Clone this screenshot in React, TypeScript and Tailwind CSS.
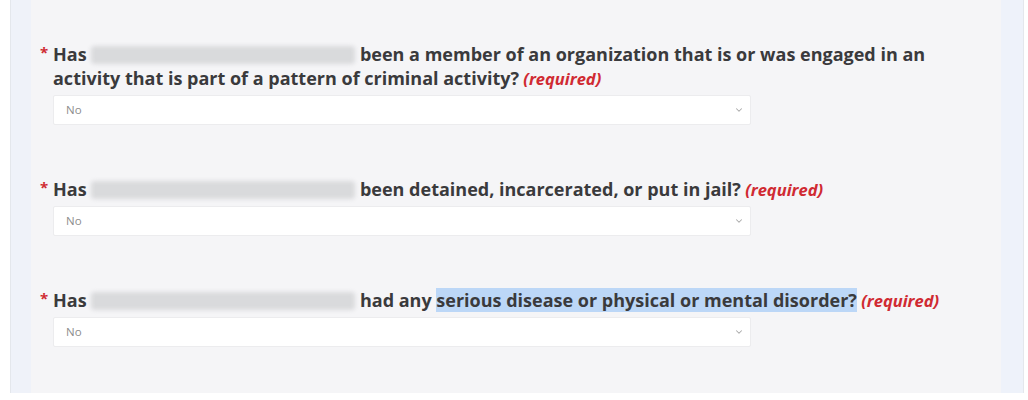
import { ChevronDown } from "lucide-react";
import type { ReactNode } from "react";

const FONT = "font-['Open_Sans','Noto_Sans',sans-serif]";

interface QuestionProps {
  children: ReactNode;
  first?: boolean;
}

// Greyed-out name placeholder inside each question
const Redacted = () => (
  <span className="inline-block w-[264px] h-[18px] align-[-3px] rounded-sm bg-[#d9dadc] blur-[2px]" />
);

const Required = () => (
  <em className="text-[16.5px] font-bold italic text-[#d02a32]"> (required)</em>
);

const NoSelect = () => (
  <div className="mt-[4px] w-[698px] h-[30px] flex items-center justify-between bg-white border border-[#ececee] rounded-[2px] pl-[12px] pr-[6px]">
    <span className="text-[11.5px] text-[#8d8d8d]">No</span>
    <ChevronDown className="w-[10px] h-[10px] text-[#a8a8a8]" strokeWidth={2.5} />
  </div>
);

const Question = ({ children, first }: QuestionProps) => (
  <div className={`flex ${first ? "" : "mt-[52px]"}`}>
    <span className="w-[13px] shrink-0 text-[15px] leading-[21px] font-bold text-[#cf2b33]">*</span>
    <div className="flex flex-col">
      <p className="text-[18px] leading-[24px] font-bold text-[#3a3a3c] max-w-[910px]">
        {children}
      </p>
      <NoSelect />
    </div>
  </div>
);

export default function App() {
  return (
    <div className={`w-[1028px] h-[400px] bg-white ${FONT}`}>
      <div className="ml-[10px] w-[1014px] h-[393px] flex border-l border-r border-[#e4e7ec]">
        <div className="w-[20px] bg-[#eff2f9]" />
        <div className="flex-1 bg-[#f5f5f7] pl-[9px] pt-[42px]">
          <Question first>
            Has <Redacted /> been a member of an organization that is or was engaged in an
            activity that is part of a pattern of criminal activity?
            <Required />
          </Question>
          <Question>
            Has <Redacted /> been detained, incarcerated, or put in jail?
            <Required />
          </Question>
          <Question>
            Has <Redacted /> had any{" "}
            <span className="bg-[#bcd7f7]">serious disease or physical or mental disorder?</span>
            <Required />
          </Question>
        </div>
        <div className="w-[22px] bg-[#eef2fa]" />
      </div>
    </div>
  );
}
